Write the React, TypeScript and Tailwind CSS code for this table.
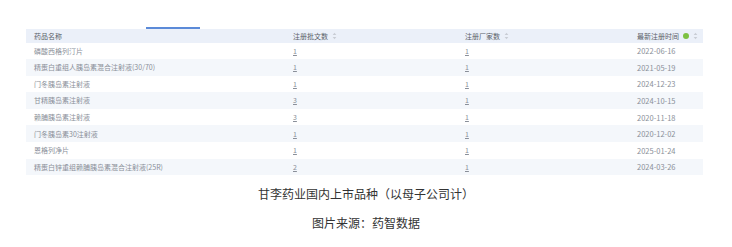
const rows = [
  { name: "磷酸西格列汀片", pz: "1", cj: "1", date: "2022-06-16" },
  { name: "精蛋白重组人胰岛素混合注射液(30/70)", pz: "1", cj: "1", date: "2021-05-19" },
  { name: "门冬胰岛素注射液", pz: "1", cj: "1", date: "2024-12-23" },
  { name: "甘精胰岛素注射液", pz: "3", cj: "1", date: "2024-10-15" },
  { name: "赖脯胰岛素注射液", pz: "3", cj: "1", date: "2020-11-18" },
  { name: "门冬胰岛素30注射液", pz: "1", cj: "1", date: "2020-12-02" },
  { name: "恩格列净片", pz: "1", cj: "1", date: "2025-01-24" },
  { name: "精蛋白锌重组赖脯胰岛素混合注射液(25R)", pz: "2", cj: "1", date: "2024-03-26" },
];

const Sort = () => (
  <svg width="5" height="8" viewBox="0 0 5 8" className="ml-[4px]">
    <path d="M2.5 0.8 L4.3 3 L0.7 3 Z" fill="#c8ccd4" />
    <path d="M2.5 7.2 L4.3 5 L0.7 5 Z" fill="#c8ccd4" />
  </svg>
);

export default function App() {
  return (
    <div
      className="w-[732px] h-[247px] bg-white pt-[27px]"
      style={{ fontFamily: '"Noto Sans CJK SC", "Noto Sans", sans-serif' }}
    >
      <div className="ml-[146px] w-[54px] h-[2px] bg-[#5b8ad8]" />
      <div className="ml-[26px] w-[677px] text-[7px] text-[#8a8f99]">
        <div className="grid grid-cols-[259px_172px_172px_74px] h-[13.5px] items-center bg-[#ebf0f9] text-[#5a5f69]">
          <div className="pl-[8px]">药品名称</div>
          <div className="pl-[8px] flex items-center">注册批文数<Sort /></div>
          <div className="pl-[8px] flex items-center">注册厂家数<Sort /></div>
          <div className="pl-[8px] flex items-center whitespace-nowrap">
            最新注册时间
            <span className="ml-[4px] w-[6px] h-[6px] rounded-full bg-[#7cc142]" />
            <Sort />
          </div>
        </div>
        {rows.map((r, i) => (
          <div
            key={i}
            className={`grid grid-cols-[259px_172px_172px_74px] h-[16.6px] items-center ${
              i % 2 === 1 ? "bg-[#f4f7fb]" : "bg-white"
            }`}
          >
            <div className="pl-[8px] whitespace-nowrap">{r.name}</div>
            <div className="pl-[8px] underline">{r.pz}</div>
            <div className="pl-[8px] underline">{r.cj}</div>
            <div className="pl-[8px] text-[7.5px]">{r.date}</div>
          </div>
        ))}
      </div>
      <div className="mt-[10px] text-center text-[12px] text-[#333] leading-[18px]">
        甘李药业国内上市品种（以母子公司计）
      </div>
      <div className="mt-[11px] text-center text-[12px] text-[#333] leading-[18px]">
        图片来源：药智数据
      </div>
    </div>
  );
}
